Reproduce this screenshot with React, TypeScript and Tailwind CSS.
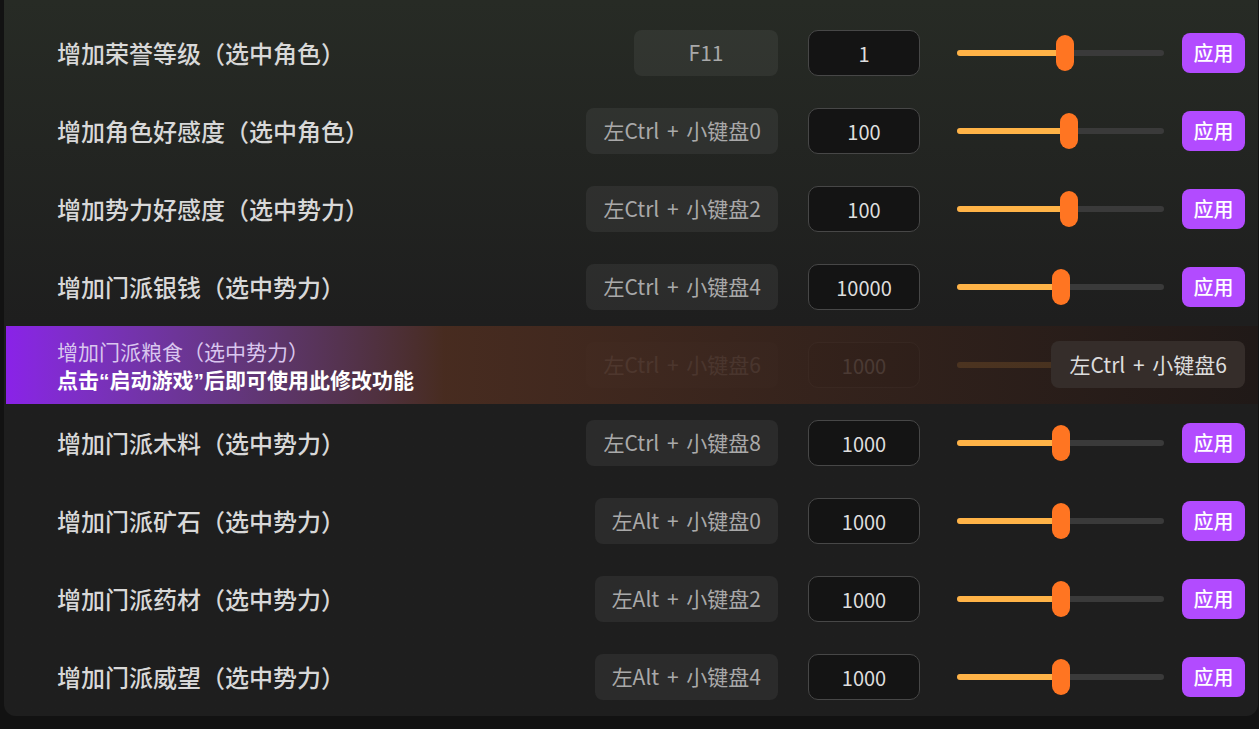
import React from 'react';

interface CheatRow {
  label: string;
  hotkey: string;
  value: string;
  pos: number; // slider position, 0..1
}

const rows: CheatRow[] = [
  { label: '增加荣誉等级（选中角色）', hotkey: 'F11', value: '1', pos: 0.52 },
  { label: '增加角色好感度（选中角色）', hotkey: '左Ctrl + 小键盘0', value: '100', pos: 0.54 },
  { label: '增加势力好感度（选中势力）', hotkey: '左Ctrl + 小键盘2', value: '100', pos: 0.54 },
  { label: '增加门派银钱（选中势力）', hotkey: '左Ctrl + 小键盘4', value: '10000', pos: 0.5 },
  { label: '增加门派粮食（选中势力）', hotkey: '左Ctrl + 小键盘6', value: '1000', pos: 0.5 },
  { label: '增加门派木料（选中势力）', hotkey: '左Ctrl + 小键盘8', value: '1000', pos: 0.5 },
  { label: '增加门派矿石（选中势力）', hotkey: '左Alt + 小键盘0', value: '1000', pos: 0.5 },
  { label: '增加门派药材（选中势力）', hotkey: '左Alt + 小键盘2', value: '1000', pos: 0.5 },
  { label: '增加门派威望（选中势力）', hotkey: '左Alt + 小键盘4', value: '1000', pos: 0.5 },
];

const FONT = { fontFamily: '"Noto Sans CJK SC", "Noto Sans", sans-serif' };
const QUOTE = { fontFamily: '"Liberation Sans", sans-serif' };

const Slider: React.FC<{ pos: number }> = ({ pos }) => (
  <div className="relative ml-[37px] h-[36px] w-[207px] flex items-center">
    <div className="h-[6px] w-full rounded-full bg-[#3a3a3a]" />
    <div
      className="absolute left-0 h-[6px] rounded-full bg-[#ffb347]"
      style={{ width: `${pos * 100}%` }}
    />
    <div
      className="absolute top-0 h-[36px] w-[18px] -translate-x-1/2 rounded-full bg-[#ff7522]"
      style={{ left: `${pos * 100}%` }}
    />
  </div>
);

const Hotkey: React.FC<{ text: string }> = ({ text }) => (
  <span className="[word-spacing:3px]">{text}</span>
);

const Row: React.FC<{ row: CheatRow; highlighted?: boolean }> = ({ row, highlighted }) => (
  <div className="relative flex h-[78px] items-center pl-[53px] pr-[13px]">
    {/* label + button sit fully under the overlay when highlighted */}
    <div className={`flex-1 text-[24px] font-medium text-[#d8d8d8] ${highlighted ? 'invisible' : ''}`}>
      {row.label}
    </div>
    <div className="flex h-[46px] min-w-[144px] items-center justify-center rounded-lg bg-white/[0.06] px-[17px] text-[21px] text-[#a9a9a9]">
      <Hotkey text={row.hotkey} />
    </div>
    <div className="ml-[30px] flex h-[46px] w-[112px] items-center justify-center rounded-[10px] border border-[#474747] bg-[#141414] pt-[2px] text-[20px] text-[#dedede]">
      {row.value}
    </div>
    <Slider pos={row.pos} />
    <button
      className={`ml-[18px] flex h-[40px] w-[63px] items-center justify-center rounded-lg bg-[#b24bff] text-[20px] font-medium text-white ${highlighted ? 'invisible' : ''}`}
    >
      应用
    </button>

    {highlighted && (
      <div className="absolute inset-y-0 left-[2px] right-0 bg-linear-to-r from-[#8a22e8] via-[#4c2d20]/90 via-35% to-[#201816]/85">
        <div className="flex h-full flex-col justify-center pl-[51px] pt-[1px]">
          <div className="text-[21px] leading-[28px] text-[#d9c6ee]">{row.label}</div>
          <div className="text-[21px] font-bold leading-[28px] text-white">
            点击<span style={QUOTE}>“</span>启动游戏<span style={QUOTE}>”</span>后即可使用此修改功能
          </div>
        </div>
        <div className="absolute right-[13px] top-[15px] flex h-[47px] items-center rounded-lg bg-[#352d2a] px-[18px] text-[21px] text-[#dddddd]">
          <Hotkey text={row.hotkey} />
        </div>
      </div>
    )}
  </div>
);

export default function App() {
  return (
    <div className="h-[729px] w-[1259px] overflow-hidden bg-[#121212]" style={FONT}>
      <div className="ml-[4px] mr-[1px] rounded-b-xl bg-linear-to-b from-[#272b25] to-[#1e1e1e] to-45% pt-[14px]">
        {rows.map((row, i) => (
          <Row key={row.label} row={row} highlighted={i === 4} />
        ))}
      </div>
    </div>
  );
}
